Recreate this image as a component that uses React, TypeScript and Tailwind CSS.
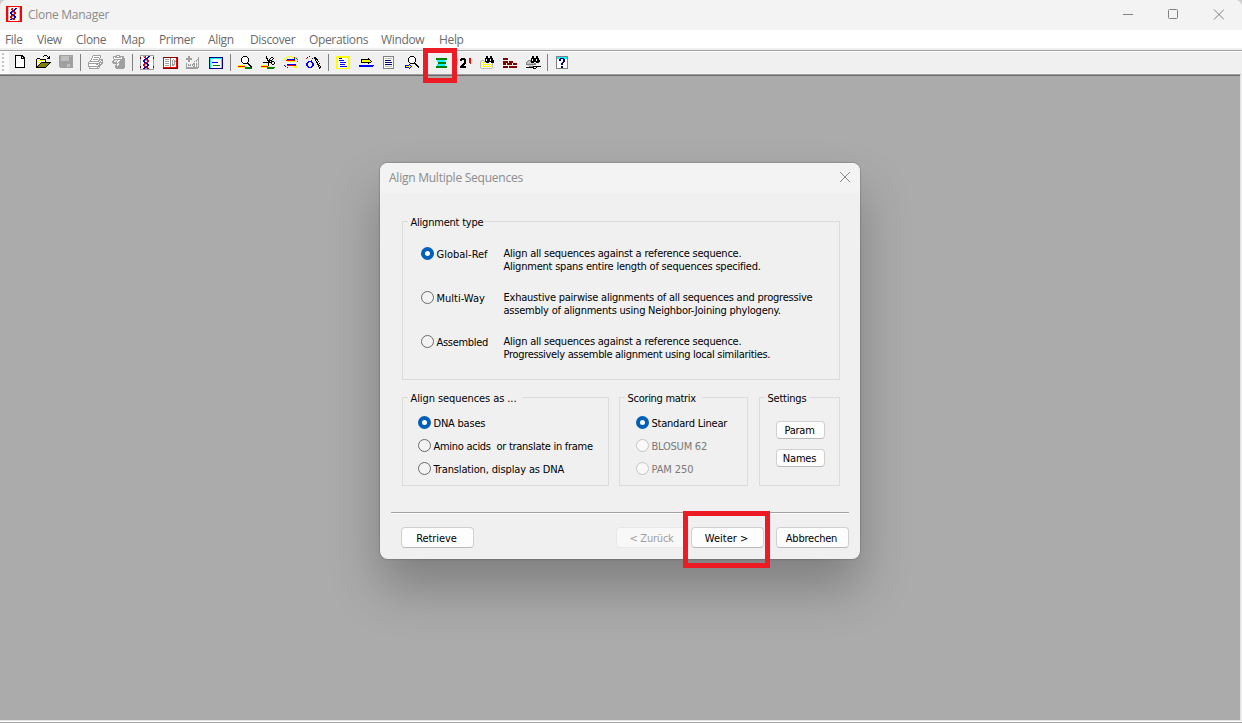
import type { ReactNode } from "react";

const PALETTE: Record<string, string> = {
  K: "#000000", W: "#ffffff", G: "#a0a0a0", g: "#c0c0c0", R: "#ff0000", D: "#800000",
  B: "#0000ff", N: "#000080", C: "#00ffff", Y: "#ffff00", y: "#ffff80", O: "#808000",
  E: "#008000", L: "#00c000", S: "#808080", r: "#e00000", b: "#0000d0",
};

const ICONS: Record<string, string[]> = {
  app: [
    "RRRRRRRRRRRRRRRR", "RRggWWWWWWWWggRR", "RRgWWGrWWbbWWgRR", "RRgWWrrWbbWWWgRR",
    "RRgWWWrbbWWWWgRR", "RRgWWbbrrWWWWgRR", "RRgWbbGGrrWWWgRR", "RRgWbbWWrrWWWgRR",
    "RRgWWbbrrWWWWgRR", "RRgWWrrbbWWWWgRR", "RRgWrrGGbbWWWgRR", "RRgWrrWWbbWWWgRR",
    "RRgWWrrbbWWWWgRR", "RRgWbbGrrWWWWgRR", "RRggWWWWWWWWggRR", "RRRRRRRRRRRRRRRR",
  ],
  fresh: [
    "...KKKKKKKK", "...KWWWWWKKK", "...KWWWWWKWKK", "...KWWWWWKKKK", "...KWWWWWWWWK",
    "...KWWWWWWWWK", "...KWWWWWWWWK", "...KWWWWWWWWK", "...KWWWWWWWWK", "...KWWWWWWWWK",
    "...KWWWWWWWWK", "...KWWWWWWWWK", "...KKKKKKKKKK",
  ],
  open: [
    ".........KKK", "........K...K.K", ".............KK", "..KKK.......KKK", ".KYWYKKKKKK",
    ".KWYWYWYWYK", ".KYWYWYWYWK", ".KWYWYKKKKKKKKKK", ".KYWYKOOOOOOOOK", ".KWYKOOOOOOOOK",
    ".KYKOOOOOOOOK", ".KKOOOOOOOOK", ".KKKKKKKKKK",
  ],
  save: [
    ".GGGGGGGGGGGGGG", ".GGggggggggGgGG", ".GGggggggggGGGG", ".GGggggggggGGGG",
    ".GGggggggggGGGG", ".GGggggggggGGGG", ".GGGGGGGGGGGGGG", ".GGGGGGGGGGGGGG", ".GGGGGGGGGGGGGG",
    ".GGGGGGGGgggGGG", ".GGGGGGGGgggGGG", ".GGGGGGGGgggGGG", "..GGGGGGGGGGGGG",
  ],
  print: [
    "......GGGGGGGG", ".....GWWWWWWWG", ".....GWGGGGGWG", "....GWWWWWWWG", "....GWGGGGGWGGGG",
    "...GWWWWWWWGGWGG", "..GGGGGGGGGGWGWG", ".GWWWWWWWWWWGGGG", ".GGGGGGGGGGGGWGG",
    ".GWWWWWWWGGWGGG", ".GWWWWWWWWWGGG", ".GGGGGGGGGGGG", "..GWWWWWWWGWG", "..GGGGGGGGGG",
  ],
  paste: [
    "......GGGG", "...GGGGWWGGGGG", "...GWGGGGGGWGG", "...GWWWWWWWWGGG", "....GGGGGGGGGGG",
    "...GG..GWWGGGGG", "..GG..GWWGGGGGG", "..GGGGGWGGGGGGG", "...GGGGGWGGGGGG", "......GWWGGGGGG",
    ".....GGWGGGGGGG", ".....GGGGGGGGGG", ".....GGGGGGGGGG", "......GGGGGGGG",
  ],
  helix: [
    ".GGGGGGGGGGGGGG", ".GWWGGrWWbbWWWG", ".DWWWrrWbbWWWWD", ".DWWWWrbbWWWWWD", ".GWWWbbrrWWWWWG",
    ".GWWbbGGrrWWWWG", ".GWWbbWWrrWWWWG", ".GWWWbbrrWWWWWG", ".GWWWrrbbWWWWWG", ".GWWrrGGbbWWWWG",
    ".GWWrrWWbbWWWWG", ".DWWWrrbbWWWWWD", ".DWWWbbrrWWWWWD", ".GWWbbGGrrWWWWG", ".GGGGGGGGGGGGGG",
  ],
  book: [
    "", "", ".DDDDDDDDDDDDDDD", ".RWWWWWWSWWWWWRD", ".RWGGGGWSWWGWWRD", ".RWWWWWWSWGWGWRD", ".RWGGGGWSWGWGGRD",
    ".RWWWWWWSWGWGWRD", ".RWGGGGWSWGWGWRD", ".RWWWWWWSWGGGWRD", ".RWGGGGWSWGGWWRD",
    ".RWWWWWWSWWWWWRD", ".RRRRRRRRRRRRRRD", ".DDDDDDDDDDDDDDD",
  ],
  addseq: [
    "", "...GG", "...GG........G", ".GGGGGG......G", ".GGGGGG.....GG", "...GG......G.G", "...GG....G.G.G",
    ".............G", ".G......GG.G.G", ".G.G.G.GGG.G.G", ".G.GGG.G.G.G.G", ".G......GG.G.G", ".GGGGGGGGGGGGG", ".GGGGGGGGGGGG",
  ],
  screen: [
    "", "", ".NNNNNNNNNNNNNN", ".NCCCCCCCCCCCCN", ".NCWWWWWWWWWWCN", ".NCWWWWWWWWWWCN", ".NCWWWWWWWWWWCN",
    ".NCWBBBBBBWWWCN", ".NCWWWWWWWWWWCN", ".NCWWWWWWWWWWCN", ".NCWWEEEEEEEWCN", ".NCWWWWWWWWWWCN",
    ".NCWWWWWWWWWWCN", ".NNNNNNNNNNNNNN",
  ],
  find: [
    "", "......KKKK", ".....KWWWWK", "....KWWWWWWK", "....KWWWWWWK", "....KWWWWWWK", "....KWWWWWWK",
    ".....KWWWWK", "......KKKKKK", "...........KK", ".YYYYYYY....KK", ".RRRRRRR.....KK", ".YYYYYYYEEEEEEK", "........EEEEEEE",
  ],
  cut: [
    "", "......K", "......K....KK", "......KK..K..K", ".......K.K..K", ".......KKKKK", "........KK.KKK", "...KKKKKKKKK..K",
    "........K..K..K", "........K...KK", ".YYYYYY.K", ".RRRRRRRYY", ".YYYYYYEEEEEEEE", ".......EEEEEEE",
  ],
  ligate: [
    "", ".....Y.Y", "...Y.....Y.R", ".Y.........E.E", ".Y..BBBBBBBB..E", "...RRRRRRRRR", "....YYYYYYYY..E",
    "", "....WWWWWWWW", "....BBBBBBBBB", ".B..RRRRRRRRR", "..B........YYYY", "....B.Y.Y..YYY",
  ],
  wand: [
    "", "...B.Y", ".B......KK", "R..Y..B.KKK", ".........KKK", ".....B...K.K", "..BBBB....K.K", ".BB..BB...KK",
    "BB....BB...K.K", "BB....BB...KK", "BB....BB....KK", ".BB..BB.....K.K", "..BBBB.......KK", ".............K",
  ],
  listing: [
    "", ".YYYYYYYYYYYYYY", ".YYYYYYYYYYYYYY", ".YYWBBBWWWWWWYY", ".YYWWWWWWWWWWYY", ".YYWBBBBBWWWWYY", ".YYWWWWWWWWWWYY",
    ".YYWWBBBBBBWWYY", ".YYWWWWWWWWWWYY", ".YYWWBBBBBWWWYY", ".YYWWWWWWWWWWYY", ".YYWWBBBBBBBWYY",
    ".YYWWWWWWWWWWYY", ".YYYYYYYYYYYYYY",
  ],
  arrow: [
    "", "", "", "..........K", "...KKKKKKKKK", "...KYYYYYYYYK", "...KYYYYYYYYYK", "...KKKKKKKKKK", "..........K",
    "", ".BBBBBBBBBBBBBBB", ".BBBBBBBBBBBBBB",
  ],
  page: [
    "", "..SSSSSSSSSSS", "..SWWWWWWWWWS", "..SWgggggggWS", "..SWWWWWWWWWS", "..SWNNNNNNWWS", "..SWWWWWWWWWS", "..SWNNNNNNNWS",
    "..SWWWWWWWWWS", "..SWNNNNNNNWS", "..SWWWWWWWWWS", "..SWgggggggWS", "..SWWWWWWWWWS", "..SSSSSSSSSSS",
  ],
  lookup: [
    "", "......KKKK", ".....KWWWWK", "....KWWWWWWK", "....KWWWWWWK", "....KWWWWWWK", "....KWWWWWWK", ".....KWWWWK",
    "......KKKKKK", ".....B.....KK", ".BBBBYB.....KK", ".BYYYYYB.....KK", ".BBBBYB.......K", ".....B",
  ],
  align: [
    "", "", "", "...EEEEEEEEEEE", "...EEEEEEEEEEE", "....CCCCCCCC", "....CCCCCCCC", ".....EEEEEEEE", ".....EEEEEEEE", "....CCCCCCCC", "....CCCCCCCC", "...EEEEEEEEEEE", "...EEEEEEEEEEE",
  ],
  two: [
    "", "", "", ".C...KKKK....RR", "CC..KKKKKK...RR", "CC..KK..KK...RR", "CC......KK...RR", "CC......KK...RR", "CC.....KKK....R", ".C....KKK",
    ".....KKK", "....KKKKKK", "....KKKKKK",
  ],
  folderfind: [
    "", ".......KK..KK", ".......KK..KK", "......KKKKKKKK", "......KWKKKWKK", "..ggg.KWKKKWKKK", ".gYWYgKKKKKKKKK", ".gWYWYWKKKWWKKK",
    ".gYWYWYWYWYWYg", ".gWYWYWYWYWYWg", ".gYWYWYWYWYWYg", ".gWYWYWYWYWYWg", ".gYWYWYWYWYWYg", "..ggggggggggg",
  ],
  bricks: [
    "", "", "", ".DDDDD", ".DDDDD", "", ".DDDDD.DDDD", ".DDDDD.DDDD", ".DDD.DDDDD.DDDD", ".DDD.DDDDD.DDDD", "", ".DDDDD.DDDDDDDD", ".DDDDD.DDDDDDDD",
  ],
  seqfind: [
    "", ".......KK..KK", ".......KK..KK", "......KKKKKKKK", "......KWKKKWKK", "...SSSKWKKKWKKK", "..SggSKKKKKKKKK", ".SggggKKKWWKKK",
    ".SgggggggSS", ".SSSSSSSSSS", "..YgYgYg", "....SSSSKKKKKKKK", ".KKKKKKKK..K", "........KKK",
  ],
  help: [
    "", "..SSSSSSSSSSSS", "..SCCCCCCCCCCS", "..SCCCNNNNCCCS", "..SWWNNWWNNWWS", "..SWWNNWWNNWWS", "..SWWWWWWNNWWS",
    "..SWWWWWNNWWWS", "..SWWWWNNWWWWS", "..SWWWWNNWWWWS", "..SWWWWWWWWWWS", "..SWWWWNNWWWWS", "..SWWWWNNWWWWS", "..SSSSSSSSSSSS",
  ],
};

function Pixels({ name }: { name: string }) {
  return (
    <svg width="16" height="16" viewBox="0 0 16 16" shapeRendering="crispEdges" className="block shrink-0">
      {ICONS[name].flatMap((row, y) =>
        row.split("").map((c, x) =>
          PALETTE[c] ? <rect key={`${x}-${y}`} x={x} y={y} width="1" height="1" fill={PALETTE[c]} /> : null
        )
      )}
    </svg>
  );
}

function Separator() {
  return <div className="mt-[-1px] h-[17px] w-px shrink-0 bg-[#808080]" />;
}

function Radio({ checked, disabled }: { checked?: boolean; disabled?: boolean }) {
  if (checked) return <span className="block size-[13px] shrink-0 rounded-full border-4 border-[#005fb8] bg-white" />;
  return (
    <span
      className={`block size-[13px] shrink-0 rounded-full border ${disabled ? "border-[#c4c4c4] bg-[#f9f9f9]" : "border-[#6a6a6a] bg-[#f3f3f3]"}`}
    />
  );
}

function Option({ label, checked, disabled, className = "" }: { label: string; checked?: boolean; disabled?: boolean; className?: string }) {
  return (
    <div className={`flex h-[13px] items-center gap-[2.5px] whitespace-pre ${disabled ? "text-[#7a7a7a]" : ""} ${className}`}>
      <Radio checked={checked} disabled={disabled} />
      <span className="pt-px">{label}</span>
    </div>
  );
}

function Group({ title, legend, className, children }: { title: string; legend: string; className: string; children: ReactNode }) {
  return (
    <fieldset className={`min-w-0 border border-[#dcdcdc] ${className}`}>
      <legend className={`ml-[5px] h-[13px] whitespace-nowrap pl-[2.5px] leading-[15px] ${legend}`}>{title}</legend>
      {children}
    </fieldset>
  );
}

function Button({ children, className, disabled }: { children: ReactNode; className: string; disabled?: boolean }) {
  return (
    <button
      className={`flex shrink-0 items-center justify-center rounded-[4px] border pr-[2px] ${disabled ? "border-[#e8e8e8] bg-[#f8f8f8] text-[#a0a0a0]" : "border-[#d0d0d0] border-b-[#bababa] bg-[#fdfdfd]"} ${className}`}
    >
      {children}
    </button>
  );
}

const MENU: [string, string][] = [
  ["File", "w-8"], ["View", "w-[39px]"], ["Clone", "w-[45px]"], ["Map", "w-[38px]"], ["Primer", "w-[49px]"],
  ["Align", "w-[42px]"], ["Discover", "w-[59px]"], ["Operations", "w-[72px]"], ["Window", "w-[58px]"], ["Help", "w-10"],
];

const TYPES = [
  {
    label: "Global-Ref", checked: true, tracking: "tracking-[0px]",
    lines: [["Align all sequences against a reference sequence.", ""], ["Alignment spans entire length of sequences specified.", ""]],
  },
  {
    label: "Multi-Way", tracking: "tracking-[0px]",
    lines: [["Exhaustive pairwise alignments of all sequences and progressive", ""], ["assembly of alignments using Neighbor-Joining phylogeny.", ""]],
  },
  {
    label: "Assembled", tracking: "tracking-[-0.3px]",
    lines: [["Align all sequences against a reference sequence.", ""], ["Progressively assemble alignment using local similarities.", "tracking-[-0.32px]"]],
  },
];

function Tools({ names }: { names: string[] }) {
  return (
    <div className="flex gap-[7px]">
      {names.map((n) => <Pixels key={n} name={n} />)}
    </div>
  );
}

function AlignDialog() {
  return (
    <div className="absolute left-[380px] top-[163px] flex h-[396px] w-[480px] flex-col overflow-hidden rounded-lg bg-[#f0f0f0] font-['DejaVu_Sans_Condensed','DejaVu_Sans',sans-serif] text-[11px] leading-[13px] tracking-[-0.22px] text-black">
      <div className="flex h-[30px] shrink-0 items-center justify-between bg-[#f3f3f3] pl-[9px] pr-[10px] font-['Open_Sans',sans-serif] text-[12px] tracking-[-0.24px] text-[#8c8c8c]">
        <span className="mb-[2px]">Align Multiple Sequences</span>
        <svg width="10" height="10" viewBox="0 0 10 10" className="mb-[2px]" stroke="#8a8a8a" strokeWidth="1">
          <path d="M0 0L10 10M10 0L0 10" />
        </svg>
      </div>
      <Group title="Alignment type" legend="w-[76px]" className="ml-[22px] mt-[22px] h-[165px] w-[438px]">
        <div className="flex flex-col gap-[18px] pl-[18px] pt-[19px]">
          {TYPES.map((t) => (
            <div key={t.label} className="flex h-[26px]">
              <div className="w-[82.5px] shrink-0"><Option label={t.label} checked={t.checked} className={t.tracking} /></div>
              <div className="whitespace-nowrap">
                {t.lines.map(([l, c]) => <div key={l} className={c}>{l}</div>)}
              </div>
            </div>
          ))}
        </div>
      </Group>
      <div className="ml-[22px] mt-[11px] flex h-[95px]">
        <Group title="Align sequences as ..." legend="w-[114px] tracking-[-0.08px]" className="w-[207px]">
          <div className="flex flex-col gap-[10px] pl-[15px] pt-[12px]">
            <Option label="DNA bases" checked />
            <Option label="Amino acids  or translate in frame" className="tracking-[-0.28px]" />
            <Option label="Translation, display as DNA" className="tracking-[-0.14px]" />
          </div>
        </Group>
        <Group title="Scoring matrix" legend="w-[77px] tracking-[-0.3px]" className="ml-[10px] w-[129px]">
          <div className="flex flex-col gap-[10px] pl-[16px] pt-[12px]">
            <Option label="Standard Linear" checked />
            <Option label="BLOSUM 62" disabled />
            <Option label="PAM 250" disabled className="tracking-[-0.1px]" />
          </div>
        </Group>
        <Group title="Settings" legend="w-[44px]" className="ml-[11px] w-[81px]">
          <div className="flex flex-col gap-[10px] pl-[16px] pt-[17px]">
            <Button className="h-[18px] w-[49px]">Param</Button>
            <Button className="h-[18px] w-[49px]">Names</Button>
          </div>
        </Group>
      </div>
      <div className="ml-[11px] mt-[26px] h-[2px] w-[458px] shrink-0 border-b border-t border-b-white border-t-[#a0a0a0]" />
      <div className="mt-[13px] flex pl-[21px]">
        <Button className="h-[21px] w-[73px] pt-[2px] tracking-[-0.1px]">Retrieve</Button>
        <Button className="ml-[142px] h-[21px] w-[73px] pt-[2px]" disabled>&lt; Zurück</Button>
        <Button className="ml-[2px] h-[21px] w-[73px] pt-[2px] tracking-[0px]">Weiter &gt;</Button>
        <Button className="ml-[12px] h-[21px] w-[73px] pt-[2px]">Abbrechen</Button>
      </div>
    </div>
  );
}

export default function App() {
  return (
    <div className="h-[723px] w-[1242px] overflow-hidden bg-[#cfcfcf] font-['Open_Sans',sans-serif] text-[12px]">
      <div className="relative flex h-full flex-col overflow-hidden rounded-t-[7px] bg-[#f0f0f0]">
        <header className="flex h-[30px] shrink-0 items-center bg-[#f3f3f3] pl-[6px] pr-[18px] tracking-[-0.28px] text-[#8c8c8c]">
          <div className="mt-[-2px]"><Pixels name="app" /></div>
          <span className="ml-[6px] flex-1">Clone Manager</span>
          <svg width="101" height="11" viewBox="0 0 101 11" fill="none" stroke="#808080" className="mt-[-1px]">
            <path d="M0 5.5H10" />
            <rect x="45.5" y="0.5" width="9" height="9" rx="1" />
            <path d="M91 0.5L101 10.5M101 0.5L91 10.5" />
          </svg>
        </header>
        <nav className="flex h-[18px] shrink-0 items-center bg-white pl-[5px] pt-[2px] tracking-[-0.35px] text-[#6b6b6b]">
          {MENU.map(([m, w]) => <span key={m} className={w}>{m}</span>)}
        </nav>
        <div className="mt-[2px] h-[2px] shrink-0 border-b border-t border-b-white border-t-[#a0a0a0]" />
        <div className="flex h-[22px] shrink-0 items-start">
          <div className="flex h-full w-[9px] shrink-0 flex-col gap-[2px] bg-[#fafafa] pl-[2px] pt-[1px]">
            {[0, 1, 2, 3, 4].map((d) => <span key={d} className="size-[2px] bg-[#c4c4c4]" />)}
          </div>
          <div className="flex pl-[3px] pt-[3px]">
            <Tools names={["fresh", "open", "save"]} />
            <div className="mx-[6px]"><Separator /></div>
            <Tools names={["print", "paste"]} />
            <div className="mx-[6px]"><Separator /></div>
            <Tools names={["helix", "book", "addseq", "screen"]} />
            <div className="mx-[6px]"><Separator /></div>
            <Tools names={["find", "cut", "ligate", "wand"]} />
            <div className="mx-[6px]"><Separator /></div>
            <Tools names={["listing", "arrow", "page", "lookup"]} />
            <div className="mx-[6px]"><Separator /></div>
            <Tools names={["align", "two", "folderfind", "bricks", "seqfind"]} />
            <div className="mx-[6px]"><Separator /></div>
            <Tools names={["help"]} />
          </div>
        </div>
        <main className="mr-[1px] flex-1 border-b border-r border-t border-b-[#e3e3e3] border-r-[#e3e3e3] border-t-[#a0a0a0]">
          <div className="h-full border-t border-[#696969] bg-[#ababab]" />
        </main>
        <div className="h-[2px] shrink-0 border-b border-b-[#a0a0a0] bg-white" />
        <div className="absolute left-[380px] top-[163px] h-[396px] w-[480px] rounded-lg shadow-[0_0_2px_rgba(0,0,0,0.45),0_28px_50px_rgba(0,0,0,0.26)]" />
        <AlignDialog />
        <div className="absolute left-[423px] top-[48px] h-[35px] w-[34px] border-[5px] border-[#ed1c24]" />
        <div className="absolute left-[683px] top-[511px] h-[57px] w-[87px] border-[5px] border-[#ed1c24]" />
      </div>
    </div>
  );
}
